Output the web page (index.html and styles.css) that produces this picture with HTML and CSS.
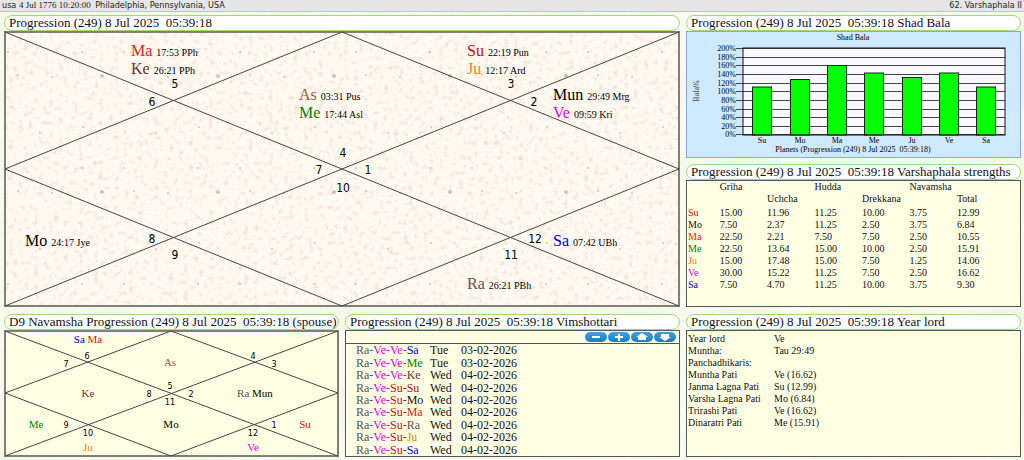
FILE: index.html
```html
<!DOCTYPE html>
<html lang="en">
<head>
<meta charset="UTF-8">
<meta name="viewport" content="width=device-width, initial-scale=1.0">
<title>62. Varshaphala II</title>
<link rel="stylesheet" href="styles.css">
</head>
<body>
<header class="topbar">
  <div>usa <span class="birth">4 Jul 1776 10:20:00</span> Philadelphia, Pennsylvania, USA</div>
  <div>62. Varshaphala II</div>
</header>

<main class="sheet">
  <section class="panel wide">
    <h2>Progression (249) 8 Jul 2025&nbsp; 05:39:18</h2>
    <svg class="chart" viewBox="0 0 676 276">
      <defs>
        <filter id="grain" x="0" y="0" width="100%" height="100%">
          <feTurbulence type="fractalNoise" baseFrequency="0.2" numOctaves="3" seed="4"/>
          <feColorMatrix values="0 0 0 0 0.88  0 0 0 0 0.74  0 0 0 0 0.7  3.2 0 0 0 -1.72"/>
        </filter>
        <pattern id="spots" width="116" height="116" patternUnits="userSpaceOnUse">
          <circle cx="98" cy="45" r="2"/>
          <circle cx="48" cy="46" r="1"/>
          <circle cx="14" cy="44" r="1"/>
          <circle cx="78" cy="21" r="1"/>
          <circle cx="79" cy="96" r="1"/>
          <circle cx="36" cy="102" r="1"/>
          <circle cx="4" cy="21" r="1"/>
        </pattern>
      </defs>
      <rect class="paper" width="676" height="276"/>
      <rect width="676" height="276" filter="url(#grain)"/>
      <rect class="spots" width="676" height="276" fill="url(#spots)"/>
      <rect class="frame" x="1" y="1" width="674" height="274"/>
      <path class="line" d="M1 1L675 275M675 1L1 275M338 1L1 138L338 275L675 138Z"/>
      <g class="num">
        <text x="171" y="57">5</text>
        <text x="148" y="75">6</text>
        <text x="339" y="126">4</text>
        <text x="315" y="143">7</text>
        <text x="364" y="143">1</text>
        <text x="339" y="161">10</text>
        <text x="507" y="57">3</text>
        <text x="530" y="75">2</text>
        <text x="148" y="212">8</text>
        <text x="171" y="228">9</text>
        <text x="531" y="212">12</text>
        <text x="507" y="228">11</text>
      </g>
      <g class="planet">
        <text x="127" y="25"><tspan class="ma">Ma</tspan> <tspan class="deg">17:53 PPh</tspan></text>
        <text x="127" y="43"><tspan class="ke">Ke</tspan> <tspan class="deg">26:21 PPh</tspan></text>
        <text x="295" y="69"><tspan class="as">As</tspan> <tspan class="deg">03:31 Pus</tspan></text>
        <text x="295" y="87"><tspan class="me">Me</tspan> <tspan class="deg">17:44 Asl</tspan></text>
        <text x="463" y="25"><tspan class="su">Su</tspan> <tspan class="deg">22:19 Pun</tspan></text>
        <text x="463" y="43"><tspan class="ju">Ju</tspan> <tspan class="deg">12:17 Ard</tspan></text>
        <text x="549" y="69">Mun <tspan class="deg">29:49 Mrg</tspan></text>
        <text x="549" y="87"><tspan class="ve">Ve</tspan> <tspan class="deg">09:59 Kri</tspan></text>
        <text x="21" y="215">Mo <tspan class="deg">24:17 Jye</tspan></text>
        <text x="549" y="215"><tspan class="sa">Sa</tspan> <tspan class="deg">07:42 UBh</tspan></text>
        <text x="463" y="258"><tspan class="ra">Ra</tspan> <tspan class="deg">26:21 PBh</tspan></text>
      </g>
    </svg>
  </section>

  <div class="stack">
    <section class="panel">
      <h2>Progression (249) 8 Jul 2025&nbsp; 05:39:18 Shad Bala</h2>
      <svg class="chart bars" viewBox="0 0 335 127">
        <rect class="sky" x="0.5" y="0.5" width="334" height="126"/>
        <rect class="plot" x="57" y="17" width="262" height="87"/>
        <path class="grid" d="M50 17.5H319M50 26.5H319M50 34.5H319M50 43.5H319M50 52.5H319M50 60.5H319M50 69.5H319M50 78.5H319M50 86.5H319M50 95.5H319M50 103.5H319"/>
        <g class="bar">
          <rect x="66.5" y="56" width="19" height="48"/>
          <rect x="104.5" y="48.5" width="19" height="55.5"/>
          <rect x="141.5" y="34.5" width="19" height="69.5"/>
          <rect x="178.5" y="42" width="19" height="62"/>
          <rect x="216.5" y="46.5" width="19" height="57.5"/>
          <rect x="253.5" y="42" width="19" height="62"/>
          <rect x="290.5" y="56" width="19" height="48"/>
        </g>
        <rect class="plot-frame" x="57" y="17" width="262" height="87"/>
        <g class="pct">
          <text x="50" y="20">200%</text>
          <text x="50" y="29">180%</text>
          <text x="50" y="37">160%</text>
          <text x="50" y="46">140%</text>
          <text x="50" y="55">120%</text>
          <text x="50" y="63">100%</text>
          <text x="50" y="72">80%</text>
          <text x="50" y="81">60%</text>
          <text x="50" y="89">40%</text>
          <text x="50" y="98">20%</text>
          <text x="50" y="106">0%</text>
        </g>
        <g class="cap">
          <text x="167" y="9">Shad Bala</text>
          <text x="76" y="112">Su</text>
          <text x="114" y="112">Mo</text>
          <text x="151" y="112">Ma</text>
          <text x="188" y="112">Me</text>
          <text x="226" y="112">Ju</text>
          <text x="263" y="112">Ve</text>
          <text x="300" y="112">Sa</text>
          <text x="167" y="121">Planets (Progression (249) 8 Jul 2025&#160; 05:39:18)</text>
          <text class="axis" transform="translate(13 60) rotate(-90)">Bala%</text>
        </g>
      </svg>
    </section>

    <section class="panel grow">
      <h2>Progression (249) 8 Jul 2025&nbsp; 05:39:18 Varshaphala strengths</h2>
      <div class="box">
        <table class="strengths">
          <thead>
            <tr><th></th><th>Griha</th><th></th><th>Hudda</th><th></th><th>Navamsha</th><th></th></tr>
            <tr><th></th><th></th><th>Uchcha</th><th></th><th>Drekkana</th><th></th><th>Total</th></tr>
          </thead>
          <tbody>
            <tr><td class="su">Su</td><td>15.00</td><td>11.96</td><td>11.25</td><td>10.00</td><td>3.75</td><td>12.99</td></tr>
            <tr><td>Mo</td><td>7.50</td><td>2.37</td><td>11.25</td><td>2.50</td><td>3.75</td><td>6.84</td></tr>
            <tr><td class="ma">Ma</td><td>22.50</td><td>2.21</td><td>7.50</td><td>7.50</td><td>2.50</td><td>10.55</td></tr>
            <tr><td class="me">Me</td><td>22.50</td><td>13.64</td><td>15.00</td><td>10.00</td><td>2.50</td><td>15.91</td></tr>
            <tr><td class="ju">Ju</td><td>15.00</td><td>17.48</td><td>15.00</td><td>7.50</td><td>1.25</td><td>14.06</td></tr>
            <tr><td class="ve">Ve</td><td>30.00</td><td>15.22</td><td>11.25</td><td>7.50</td><td>2.50</td><td>16.62</td></tr>
            <tr><td class="sa">Sa</td><td>7.50</td><td>4.70</td><td>11.25</td><td>10.00</td><td>3.75</td><td>9.30</td></tr>
          </tbody>
        </table>
      </div>
    </section>
  </div>

  <section class="panel">
    <h2>D9 Navamsha Progression (249) 8 Jul 2025&nbsp; 05:39:18 (spouse)</h2>
    <svg class="chart small" viewBox="0 0 335 127">
      <rect class="cream" width="335" height="127"/>
      <rect class="frame" x="1" y="1" width="333" height="125"/>
      <path class="line" d="M1 1L334 126M334 1L1 126M167 1L1 63L167 126L334 63Z"/>
      <g class="num">
        <text x="83" y="29">6</text>
        <text x="62" y="37">7</text>
        <text x="249" y="29">4</text>
        <text x="270" y="37">3</text>
        <text x="166" y="59">5</text>
        <text x="145" y="67">8</text>
        <text x="187" y="67">2</text>
        <text x="166" y="75">11</text>
        <text x="62" y="98">9</text>
        <text x="84" y="106">10</text>
        <text x="270" y="98">1</text>
        <text x="249" y="106">12</text>
      </g>
      <g class="planet">
        <text x="84" y="13"><tspan class="sa">Sa</tspan> <tspan class="ma">Ma</tspan></text>
        <text class="as" x="166" y="36">As</text>
        <text class="ke" x="84" y="67">Ke</text>
        <text x="251" y="67"><tspan class="ra">Ra</tspan> Mun</text>
        <text class="me" x="32" y="98">Me</text>
        <text x="167" y="98">Mo</text>
        <text class="su" x="301" y="98">Su</text>
        <text class="ju" x="84" y="121">Ju</text>
        <text class="ve" x="249" y="121">Ve</text>
      </g>
    </svg>
  </section>

  <section class="panel">
    <h2>Progression (249) 8 Jul 2025&nbsp; 05:39:18 Vimshottari</h2>
    <div class="box">
      <div class="tools">
        <button type="button" aria-label="Less"><svg viewBox="0 0 22 10"><path d="M7 4h8v2H7z"/></svg></button>
        <button type="button" aria-label="More"><svg viewBox="0 0 22 10"><path d="M10 2h2v2h3v2h-3v3h-2V6H7V4h3z"/></svg></button>
        <button type="button" aria-label="Up"><svg viewBox="0 0 22 10"><path d="M11 1l6 4h-2v3H7V5H5z"/></svg></button>
        <button type="button" aria-label="Down"><svg viewBox="0 0 22 10"><path d="M11 9L5 5h2V2h8v3h2z"/></svg></button>
      </div>
      <table class="dasha">
        <tr><td><span class="ra">Ra-</span><span class="ve">Ve-Ve-</span><span class="sa">Sa</span></td><td>Tue</td><td>03-02-2026</td></tr>
        <tr><td><span class="ra">Ra-</span><span class="ve">Ve-Ve-</span><span class="me">Me</span></td><td>Tue</td><td>03-02-2026</td></tr>
        <tr><td><span class="ra">Ra-</span><span class="ve">Ve-Ve-</span><span class="ke">Ke</span></td><td>Wed</td><td>04-02-2026</td></tr>
        <tr><td><span class="ra">Ra-</span><span class="ve">Ve-</span><span class="su">Su-Su</span></td><td>Wed</td><td>04-02-2026</td></tr>
        <tr><td><span class="ra">Ra-</span><span class="ve">Ve-</span><span class="su">Su-</span>Mo</td><td>Wed</td><td>04-02-2026</td></tr>
        <tr><td><span class="ra">Ra-</span><span class="ve">Ve-</span><span class="su">Su-</span><span class="ma">Ma</span></td><td>Wed</td><td>04-02-2026</td></tr>
        <tr><td><span class="ra">Ra-</span><span class="ve">Ve-</span><span class="su">Su-</span><span class="ra">Ra</span></td><td>Wed</td><td>04-02-2026</td></tr>
        <tr><td><span class="ra">Ra-</span><span class="ve">Ve-</span><span class="su">Su-</span><span class="ju">Ju</span></td><td>Wed</td><td>04-02-2026</td></tr>
        <tr><td><span class="ra">Ra-</span><span class="ve">Ve-</span><span class="su">Su-</span><span class="sa">Sa</span></td><td>Wed</td><td>04-02-2026</td></tr>
      </table>
    </div>
  </section>

  <section class="panel">
    <h2>Progression (249) 8 Jul 2025&nbsp; 05:39:18 Year lord</h2>
    <div class="box">
      <table class="yearlord">
        <tr><td>Year lord</td><td>Ve</td></tr>
        <tr><td>Muntha:</td><td>Tau 29:49</td></tr>
        <tr><td>Panchadhikaris:</td><td></td></tr>
        <tr><td>Muntha Pati</td><td>Ve (16.62)</td></tr>
        <tr><td>Janma Lagna Pati</td><td>Su (12.99)</td></tr>
        <tr><td>Varsha Lagna Pati</td><td>Mo (6.84)</td></tr>
        <tr><td>Trirashi Pati</td><td>Ve (16.62)</td></tr>
        <tr><td>Dinaratri Pati</td><td>Me (15.91)</td></tr>
      </table>
    </div>
  </section>
</main>
</body>
</html>
```
FILE: styles.css
```css
* {
  box-sizing: border-box;
}

body {
  margin: 0;
  font-family: "Liberation Serif", "Times New Roman", serif;
  font-size: 10px;
  color: #111;
  background-color: #fafcf3;
  background-image:
    radial-gradient(ellipse at 20% 30%, #f3f8e4, transparent 60%),
    radial-gradient(ellipse at 80% 70%, #f1f6e2, transparent 60%);
  background-size: 90px 70px, 130px 110px;
}

.topbar {
  display: flex;
  justify-content: space-between;
  padding: 0 2px;
  font-family: "DejaVu Sans Condensed", Tahoma, sans-serif;
  font-size: 9px;
  line-height: 11px;
  color: #222;
  background: #e6e6e6;
  border-bottom: 1px solid #bfbfcf;
}

.birth {
  margin-right: 2px;
  font-family: "Liberation Serif", "Times New Roman", serif;
}

.sheet {
  display: grid;
  grid-template-columns: repeat(3, minmax(0, 1fr));
  gap: 7px 6px;
  padding: 3px 3px 3px 4px;
}

.wide {
  grid-column: span 2;
}

.stack {
  display: flex;
  flex-direction: column;
  gap: 6px;
}

.panel {
  display: flex;
  flex-direction: column;
  min-width: 0;
}

.grow {
  flex: 1;
}

.panel h2 {
  margin: 0;
  padding: 0 4px;
  font-size: 13px;
  font-weight: normal;
  line-height: 14px;
  white-space: nowrap;
  background: #fff;
  border: 1px solid #9fdc70;
  border-radius: 8px;
}

.box {
  flex: 1;
  background: #ffffe3;
  border: 1px solid #555;
}

/* planets */
.su { color: #c01010; fill: #c01010; }
.ma { color: #e02020; fill: #e02020; }
.me { color: #008000; fill: #008000; }
.ju { color: #f08010; fill: #f08010; }
.ve { color: #e000e0; fill: #e000e0; }
.sa { color: #0000d8; fill: #0000d8; }
.ra { color: #555; fill: #555; }
.ke { color: #703030; fill: #703030; }
.as { color: #9a5a30; fill: #9a5a30; }

/* charts */
.chart {
  display: block;
  width: 100%;
}

.paper { fill: #fefaf0; }
.cream { fill: #ffffe3; }
.spots { opacity: 0.2; }

.frame {
  fill: none;
  stroke: #808078;
  stroke-width: 2;
}

.line {
  fill: none;
  stroke: #444;
  stroke-width: 1;
}

.num {
  font-family: "DejaVu Sans Condensed", Tahoma, sans-serif;
  font-size: 12px;
  text-anchor: middle;
}

.planet { font-size: 16px; }
.deg { font-size: 10px; }
.small .num { font-size: 9px; }

.small .planet {
  font-size: 11px;
  text-anchor: middle;
}

/* shad bala */
.sky {
  fill: #cfe9ff;
  stroke: #86a8dc;
}

.plot { fill: #faf8ff; }

.plot-frame {
  fill: none;
  stroke: #111;
  stroke-width: 1;
}

.grid { stroke: #444; }

.bar rect {
  fill: #0f0;
  stroke: #063006;
}

.bars text { font-size: 8px; }
.pct { text-anchor: end; }
.cap { text-anchor: middle; }
.axis { fill: #444; }

/* tables */
table {
  border-collapse: collapse;
  width: 100%;
  table-layout: fixed;
}

th, td {
  padding: 0;
  font-weight: normal;
  text-align: left;
  line-height: 12px;
  white-space: nowrap;
}

th { height: 12px; }

.strengths {
  width: 95%;
  margin-left: 1px;
}

.strengths th:first-child { width: 10%; }

.strengths tbody tr:first-child td { padding-top: 2px; }

.yearlord { margin: 2px 1px; }

.yearlord td:first-child { width: 86px; }

.tools {
  display: flex;
  justify-content: flex-end;
  gap: 1px;
  padding: 1px 3px;
  border-bottom: 1px solid #555;
}

.tools button {
  width: 22px;
  height: 10px;
  padding: 0;
  border: none;
  border-radius: 5px;
  background: linear-gradient(#3da2dc, #1c7dc0);
  cursor: pointer;
}

.tools svg {
  display: block;
  fill: #fff;
}

.dasha {
  height: 112px;
  font-size: 12px;
}

.dasha td:first-child {
  width: 84px;
  padding-left: 10px;
}

.dasha td:nth-child(2) { width: 31px; }
```
